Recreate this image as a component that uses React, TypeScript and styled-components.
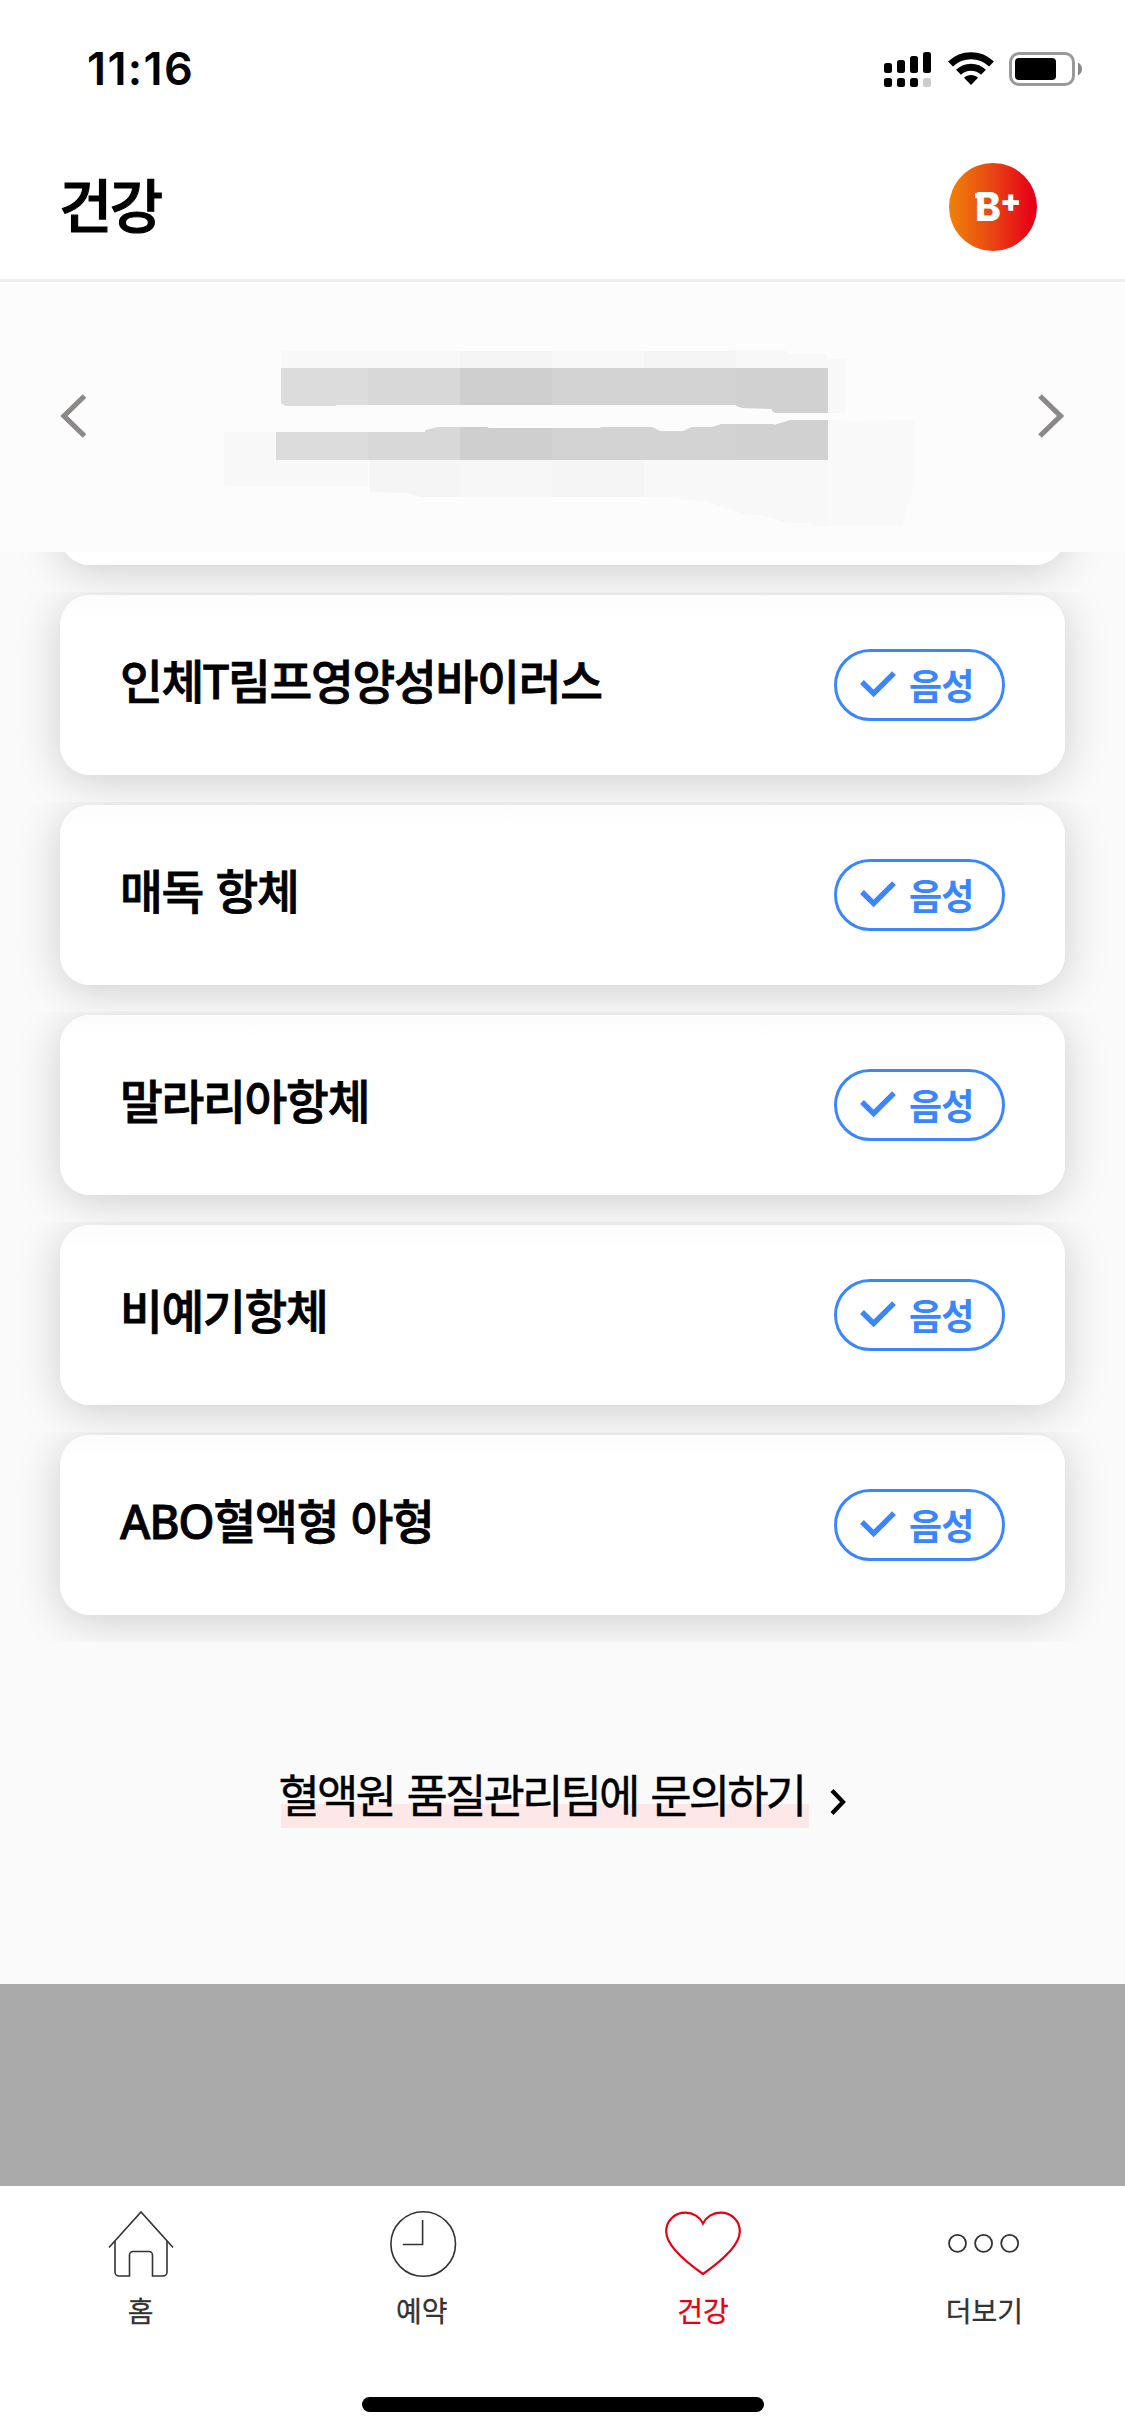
import React from "react";
import styled, { createGlobalStyle } from "styled-components";

const GlobalStyle = createGlobalStyle`
  *, *::before, *::after { box-sizing: border-box; }
  body { margin: 0; background: #fff; }
`;

const Screen = styled.div`
  width: 1125px;
  height: 2436px;
  display: flex;
  flex-direction: column;
  overflow: hidden;
  background: #fafafa;
  color: #000;
  font-family: "Noto Sans CJK KR", "Noto Sans", sans-serif;
  svg { display: block; flex: none; }
`;

const StatusBar = styled.div`
  flex: none;
  height: 132px;
  padding: 0 42px 0 87px;
  display: flex;
  justify-content: space-between;
  background: #fff;
`;

const Clock = styled.time`
  font: 600 45px/54px "Inter", sans-serif;
  letter-spacing: 1.4px;
  margin-top: 42px;
`;

const StatusIcons = styled.div`
  display: flex;
  align-items: flex-start;
  margin-top: 51px;
`;

const Header = styled.header`
  flex: none;
  height: 150px;
  padding: 0 88px 0 59px;
  display: flex;
  justify-content: space-between;
  background: #fff;
  border-bottom: 3px solid #eee;
`;

const PageTitle = styled.h1`
  margin: 29px 0 0;
  font-size: 58px;
  line-height: 84px;
  font-weight: 500;
  letter-spacing: -2.5px;
  -webkit-text-stroke: 1.1px currentColor;
`;

const BloodType = styled.div`
  width: 88px;
  height: 88px;
  margin-top: 31px;
  padding: 24px 0 0 26px;
  border-radius: 50%;
  display: flex;
  align-items: flex-start;
  background: linear-gradient(90deg, #ee820a 0%, #ea4b12 45%, #e60018 95%);
  color: #fff;
`;

const TypeLetter = styled.span`
  position: relative;
  font: 800 39px/40px "Inter", sans-serif;
  width: 25px;
  &::before {
    content: "";
    position: absolute;
    left: 0;
    top: 6px;
    width: 8px;
    height: 5px;
    background: #fff;
  }
`;

const TypeSign = styled.span`
  font: 900 31px/28px "Inter", sans-serif;
`;

const DateNav = styled.div`
  flex: none;
  height: 270px;
  padding: 0 60px;
  display: flex;
  justify-content: space-between;
  background: #fcfcfc;
`;

const ArrowButton = styled.button`
  width: 28px;
  height: 48px;
  margin-top: 110px;
  padding: 0;
  border: 0;
  background: none;
`;

const Period = styled.div`
  flex: none;
  margin: 67px 62px 0 73px;
`;

const List = styled.main`
  flex: none;
  display: flex;
  flex-direction: column;
`;

const Slot = styled.div<{ $cut?: boolean }>`
  flex: none;
  height: ${(p) => (p.$cut ? 40 : 210)}px;
  padding: 3px 60px 27px;
  display: flex;
  flex-direction: column;
  justify-content: flex-end;
  overflow: hidden;
`;

const Card = styled.section`
  flex: none;
  height: 180px;
  padding: 0 60px;
  border-radius: 30px;
  display: flex;
  align-items: center;
  justify-content: space-between;
  background: linear-gradient(#fcfcfc, #fff 24px);
  box-shadow: 0 6px 45px rgba(0, 0, 0, 0.18);
`;

const TestName = styled.h2`
  margin: 0 0 9px;
  font-family: "Noto Sans", "Noto Sans CJK KR", sans-serif;
  font-size: 46.5px;
  line-height: 72px;
  font-weight: 500;
  letter-spacing: -1.25px;
  word-spacing: 1.5px;
  -webkit-text-stroke: 0.8px currentColor;
`;

const Badge = styled.span`
  width: 171px;
  height: 72px;
  border: 3px solid #3a86ff;
  border-radius: 36px;
  display: flex;
  align-items: center;
  padding-left: 23px;
  gap: 12px;
  color: #3a86ff;
`;

const BadgeText = styled.span`
  font-size: 36px;
  line-height: 54px;
  font-weight: 700;
  letter-spacing: -0.8px;
  margin-bottom: 3px;
`;

const Contact = styled.div`
  flex: none;
  height: 342px;
  padding-top: 117px;
  display: flex;
  justify-content: center;
  align-items: flex-start;
`;

const ContactLink = styled.a`
  display: flex;
  align-items: flex-start;
  gap: 20px;
  padding-left: 2px;
  svg { margin-top: 29px; }
`;

const Marked = styled.span`
  width: 528px;
  height: 69px;
  font-size: 45px;
  line-height: 69px;
  font-weight: 400;
  letter-spacing: -2.9px;
  word-spacing: 5.4px;
  white-space: nowrap;
  text-indent: -2px;
  -webkit-text-stroke: 0.4px currentColor;
  background: linear-gradient(#fde7e7, #fde7e7) 0 100% / 100% 24px no-repeat;
`;

const Filler = styled.div`
  flex: none;
  height: 202px;
  background: #aaa;
`;

const TabBar = styled.nav`
  flex: none;
  height: 211px;
  display: grid;
  grid-template-columns: repeat(4, 1fr);
  background: #fff;
`;

const Tab = styled.a<{ $active?: boolean }>`
  display: flex;
  flex-direction: column;
  align-items: center;
  padding-top: 22px;
  color: ${(p) => (p.$active ? "#e60012" : "#333")};
`;

const TabLabel = styled.span`
  margin-top: 11px;
  font-size: 28px;
  line-height: 42px;
  -webkit-text-stroke: 0.3px currentColor;
`;

const HomeArea = styled.div`
  flex: none;
  height: 39px;
  display: flex;
  justify-content: center;
  background: #fff;
`;

const HomeIndicator = styled.div`
  width: 402px;
  height: 15px;
  border-radius: 8px;
  background: #000;
`;

const Chevron = ({ right }: { right?: boolean }) => (
  <svg width="28" height="48" viewBox="0 0 28 48" fill="none" stroke="#8c8888" strokeWidth="5.2">
    <path d={right ? "M3 4 23.5 24 3 44" : "M24.5 4 4 24 24.5 44"} />
  </svg>
);

const StatusGlyphs = () => (
  <svg width="199" height="38" viewBox="884 51 199 38">
    <rect x="884" y="63" width="8" height="10" rx="2.5" />
    <rect x="897" y="60" width="8" height="13" rx="2.5" />
    <rect x="910" y="56" width="8" height="17" rx="2.5" />
    <rect x="923" y="52" width="8" height="21" rx="2.5" />
    <rect x="884" y="78" width="8" height="9" rx="2.5" />
    <rect x="897" y="78" width="8" height="9" rx="2.5" />
    <rect x="910" y="78" width="8" height="9" rx="2.5" />
    <rect x="923" y="78" width="8" height="9" rx="2.5" fill="#ccc" />
    <g fill="none" stroke="#000" strokeWidth="7">
      <path d="M950.5 64a29.5 29.5 0 0 1 41 0" />
      <path d="M958.5 72.2a18 18 0 0 1 25 0" />
    </g>
    <path d="M971 85l-7-7.2c4-3.6 10-3.6 14 0z" />
    <rect x="1010.5" y="53.5" width="63" height="31" rx="8.5" fill="none" stroke="#999" strokeWidth="3" />
    <rect x="1015" y="58" width="41" height="22" rx="4" />
    <path d="M1078 62.5c5.3 2.4 5.3 10.6 0 13z" fill="#888" />
  </svg>
);

const MaskedPeriod = () => (
  <svg width="692" height="180" viewBox="222 349 692 180">
    <g fill="#f8f8f8">
      <path d="M281 351H733V350H784L790 354H825L828 358V368H281z" />
      <path d="M828 359H845V412L840 413H828z" />
      <path d="M224 432H276V486H226L224 484z" />
      <path d="M276 460H368V486H276z" />
      <path d="M644 460H828V526H816L808 523H787L760 515H747L722 507 705 501 685 500 672 497H644z" />
      <path d="M828 420H843L845 421 914 420V478L911 497 904 517 903 526H828z" fill="#f9f9f9" />
    </g>
    <g fill="#f5f5f5">
      <path d="M460 351H552V368H460zM644 351H736V368H644z" />
      <path d="M369 460H460V497H420L408 493 369 492z" />
      <path d="M552 460H644V497H552z" />
    </g>
    <path d="M460 460H552V497H460z" fill="#f7f7f7" />
    <path d="M281 368H368V405H336V406H285L281 403zM276 432H368V460H276z" fill="#dcdcdc" />
    <path d="M368 368H460V405H368zM368 432H425V430L430 429 437 427H460V460H368z" fill="#d8d8d8" />
    <path d="M460 368H552V405H460zM460 427H487L489 428H552V460H460z" fill="#cfcfcf" />
    <path d="M552 368H736V405H552zM552 428H600L601 427H652L660 431H683L692 427H712L721 424H736V460H552z" fill="#d3d3d3" />
    <path d="M736 368H828V413H775L772 411V409L742 408 736 406zM736 424H774V425L790 420H828V460H736z" fill="#d1d1d1" />
  </svg>
);

const Check = () => (
  <svg width="37" height="28" viewBox="0 0 37 28" fill="none" stroke="#3a86ff" strokeWidth="5.4">
    <path d="M2 11 13.6 22.500 34 2.100" />
  </svg>
);

const tests = ["인체T림프영양성바이러스", "매독 항체", "말라리아항체", "비예기항체", "ABO혈액형 아형"];

const line = { width: 82, height: 70, viewBox: "0 0 82 70", fill: "none", stroke: "currentColor" };

const tabs = [
  {
    label: "홈",
    icon: (
      <svg {...line} strokeWidth="1.6">
        <path d="M9 39.5 41 4 73 39.5" />
        <path d="M15 33v31a4 4 0 0 0 4 4h10.5V47a3.5 3.5 0 0 1 3.5-3.5h16a3.5 3.5 0 0 1 3.5 3.5V68H63a4 4 0 0 0 4-4V33" />
      </svg>
    ),
  },
  {
    label: "예약",
    icon: (
      <svg {...line} strokeWidth="1.6">
        <circle cx="42.2" cy="36" r="32.3" />
        <path d="M41.6 12v24.5H21.8" />
      </svg>
    ),
  },
  {
    label: "건강",
    active: true,
    icon: (
      <svg {...line} strokeWidth="2.2">
        <path d="M41 15.5C38 9 31 4.700 23.500 4.700 12 4.700 4.200 13 4.200 23.500 4.200 34 14 47 41 66 68 47 77.800 34 77.800 23.500 77.800 13 70 4.700 58.500 4.700 51 4.700 44 9 41 15.500z" />
      </svg>
    ),
  },
  {
    label: "더보기",
    icon: (
      <svg {...line} strokeWidth="1.8">
        <circle cx="14.5" cy="35.3" r="8.5" />
        <circle cx="40.6" cy="35.3" r="8.5" />
        <circle cx="66.7" cy="35.3" r="8.5" />
      </svg>
    ),
  },
];

export default function App() {
  return (
    <Screen>
      <GlobalStyle />
      <StatusBar>
        <Clock>11:16</Clock>
        <StatusIcons>
          <StatusGlyphs />
        </StatusIcons>
      </StatusBar>
      <Header>
        <PageTitle>건강</PageTitle>
        <BloodType>
          <TypeLetter>B</TypeLetter>
          <TypeSign>+</TypeSign>
        </BloodType>
      </Header>
      <DateNav>
        <ArrowButton>
          <Chevron />
        </ArrowButton>
        <Period>
          <MaskedPeriod />
        </Period>
        <ArrowButton>
          <Chevron right />
        </ArrowButton>
      </DateNav>
      <List>
        <Slot $cut>
          <Card />
        </Slot>
        {tests.map((name) => (
          <Slot key={name}>
            <Card>
              <TestName>{name}</TestName>
              <Badge>
                <Check />
                <BadgeText>음성</BadgeText>
              </Badge>
            </Card>
          </Slot>
        ))}
      </List>
      <Contact>
        <ContactLink>
          <Marked>혈액원 품질관리팀에 문의하기</Marked>
          <svg width="18" height="28" viewBox="0 0 18 28" fill="none" stroke="#000" strokeWidth="4.2">
            <path d="M3 2.5 14 14 3 25.5" />
          </svg>
        </ContactLink>
      </Contact>
      <Filler />
      <TabBar>
        {tabs.map((tab) => (
          <Tab key={tab.label} $active={tab.active}>
            {tab.icon}
            <TabLabel>{tab.label}</TabLabel>
          </Tab>
        ))}
      </TabBar>
      <HomeArea>
        <HomeIndicator />
      </HomeArea>
    </Screen>
  );
}
